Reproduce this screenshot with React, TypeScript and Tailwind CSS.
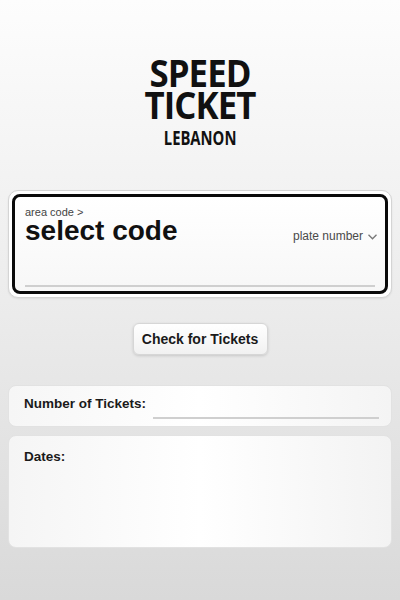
import React from 'react'

const App: React.FC = () => {
  return (
    <div className="w-[400px] h-[600px] overflow-hidden bg-gradient-to-b from-[#fdfdfd] via-[#ececec] to-[#d9d9d9] font-['Liberation_Sans',Arial,sans-serif]">
      {/* Logo */}
      <div className="pt-[57px] flex flex-col items-center text-[#111] font-['Open_Sans',sans-serif] font-bold">
        <div className="text-center text-[37px] leading-[32px] tracking-[-1px] scale-x-[0.94]">
          SPEED
          <br />
          TICKET
        </div>
        <div className="mt-[8px] text-[20px] leading-[17px] scale-x-[0.74]">LEBANON</div>
      </div>

      {/* Plate */}
      <div className="mt-[44px] mx-2 h-[108px] rounded-[10px] border border-[#d4d4d4] bg-white p-[3px] shadow-[0_1px_2px_rgba(0,0,0,0.08)]">
        <div className="h-full rounded-[8px] border-[3px] border-[#0a0a0a] bg-gradient-to-b from-white to-[#f7f7f7] flex flex-col pl-[10px] pr-[8px] pt-[9px]">
          <div className="text-[11px] leading-[12px] text-[#444]">area code &gt;</div>
          <div className="flex items-baseline justify-between">
            <div className="text-[28px] leading-[26px] font-bold text-[#111]">select code</div>
            <div className="flex items-center gap-[5px] text-[12px] text-[#4a4a4a]">
              plate number
              <svg width="9" height="6" viewBox="0 0 9 6" fill="none" stroke="#777" strokeWidth="1.3" className="mt-[2px]">
                <path d="M0.5 0.8 L4.5 4.8 L8.5 0.8" />
              </svg>
            </div>
          </div>
          <div className="mt-auto mb-[4px] h-[2px] mr-[2px] bg-[#cfcfcf]" />
        </div>
      </div>

      {/* Button */}
      <div className="mt-[25px] flex justify-center">
        <button className="w-[135px] h-[32px] rounded-[6px] border border-[#d6d6d6] bg-gradient-to-b from-white to-[#f1f1f1] shadow-[0_1px_3px_rgba(0,0,0,0.15)] text-[14px] font-bold text-[#1a1a1a]">
          Check for Tickets
        </button>
      </div>

      {/* Number of tickets */}
      <div className="mt-[30px] mx-2 h-[42px] rounded-[8px] border border-[#e2e2e2] bg-gradient-to-r from-[#f6f6f6] via-white to-[#f4f4f4] flex items-center pl-[15px] pr-[12px]">
        <div className="text-[13.5px] font-bold text-[#1a1a1a] pb-[3px]">Number of Tickets:</div>
        <div className="ml-[7px] flex-1 self-end mb-[7px] h-[2px] bg-[#cfcfcf]" />
      </div>

      {/* Dates */}
      <div className="mt-[8px] mx-2 h-[113px] rounded-[8px] border border-[#e2e2e2] bg-gradient-to-r from-[#f5f5f5] via-white to-[#f3f3f3] pl-[15px] pt-[11px]">
        <div className="text-[13.5px] font-bold text-[#1a1a1a]">Dates:</div>
      </div>
    </div>
  )
}

export default App
